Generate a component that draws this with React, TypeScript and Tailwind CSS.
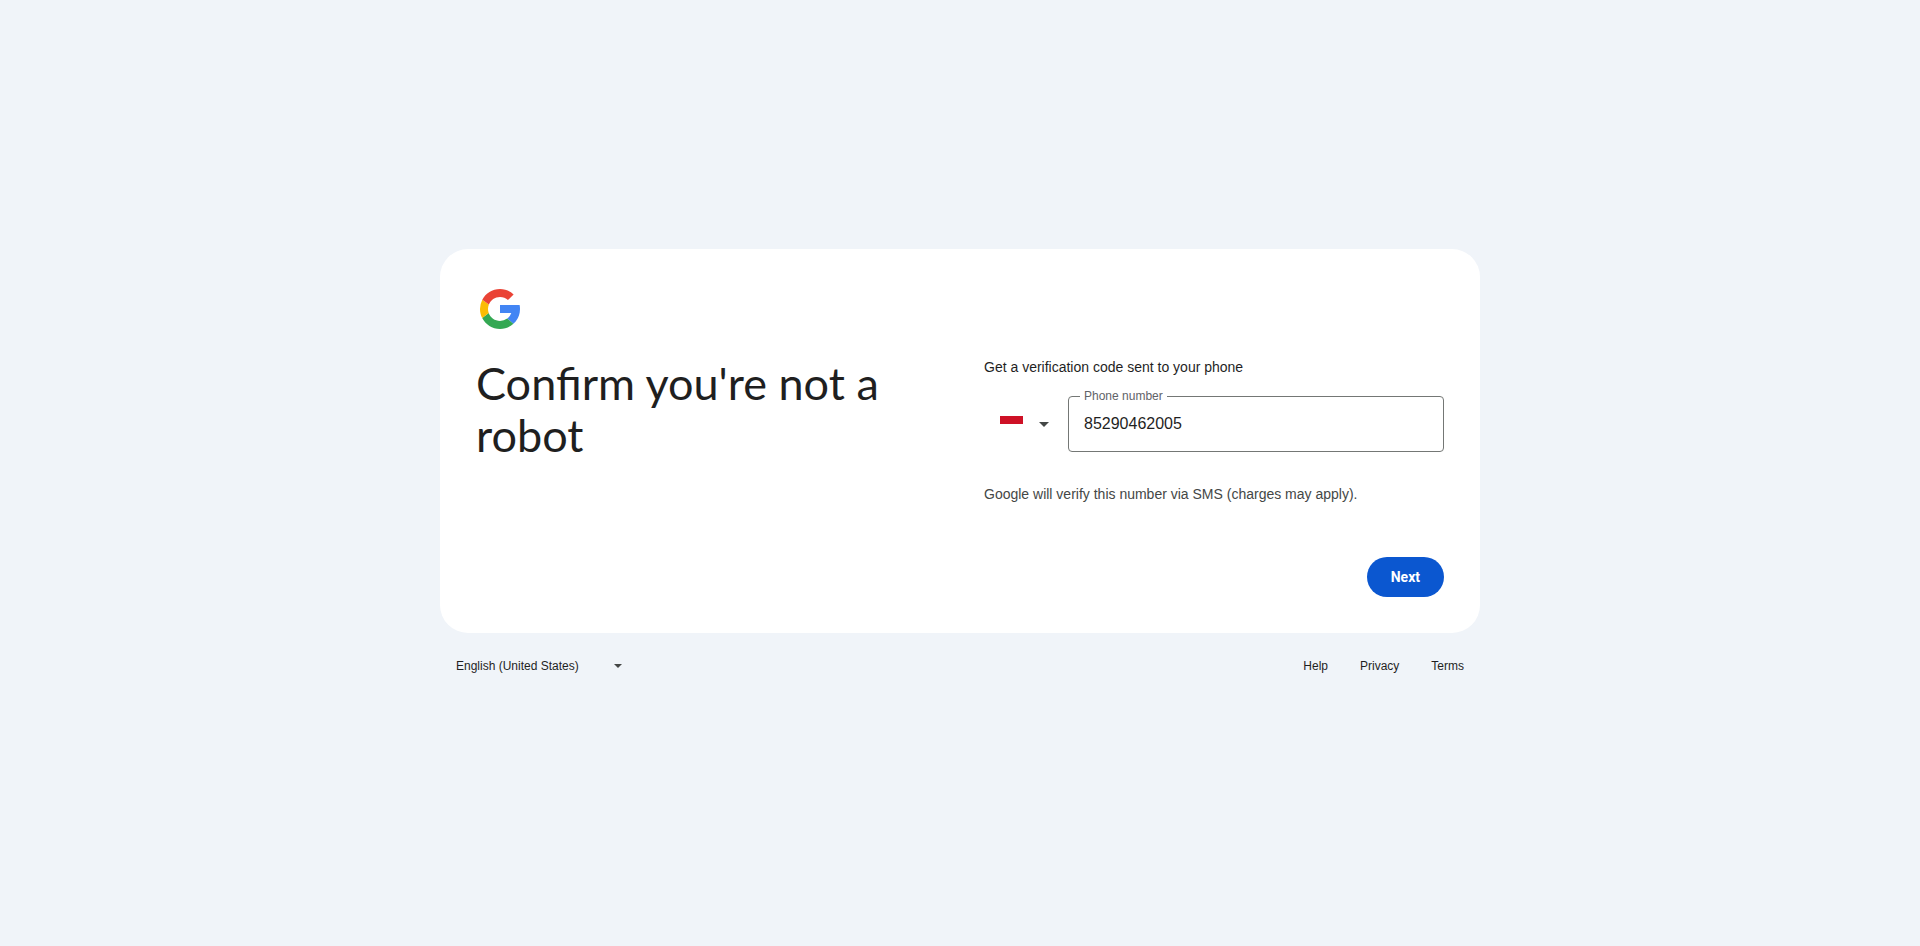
import { useState } from "react";

const links = ["Help", "Privacy", "Terms"];

const GoogleLogo = () => (
  <svg viewBox="0 0 48 48" className="size-12" aria-hidden="true">
    <path
      fill="#4285F4"
      d="M43.611 20.083 43.595 20H24v8h11.303a12.04 12.04 0 0 1-4.087 5.571l6.19 5.238C36.971 39.205 44 34 44 24c0-1.341-.138-2.65-.389-3.917z"
    />
    <path
      fill="#34A853"
      d="M24 44c5.166 0 9.86-1.977 13.409-5.192l-6.19-5.238A11.91 11.91 0 0 1 24 36c-5.202 0-9.619-3.317-11.283-7.946l-6.522 5.025C9.505 39.556 16.227 44 24 44z"
    />
    <path
      fill="#FBBC04"
      d="M12.717 28.054A11.97 11.97 0 0 1 12 24c0-1.6.313-3.127.877-4.51l-6.571-4.8A19.9 19.9 0 0 0 4 24c0 3.262.79 6.34 2.195 9.079z"
    />
    <path
      fill="#EA4335"
      d="m6.306 14.691 6.571 4.819C14.655 15.108 18.961 12 24 12c3.059 0 5.842 1.154 7.961 3.039l5.657-5.657C34.046 6.053 29.268 4 24 4 16.318 4 9.656 8.337 6.306 14.691z"
    />
  </svg>
);

const Caret = ({ className }: { className: string }) => (
  <svg viewBox="0 0 10 5" className={className} aria-hidden="true">
    <path fill="#444746" d="M0 0h10L5 5z" />
  </svg>
);

const CountrySelect = () => (
  <div className="relative flex h-14 w-[84px] items-center">
    <svg viewBox="0 0 24 16" className="pointer-events-none absolute left-4 h-4 w-6" aria-hidden="true">
      <path fill="#fff" d="M0 0h24v16H0z" />
      <path fill="#CE1126" d="M0 0h23v8H0z" />
    </svg>
    <select aria-label="Select a country" className="h-full w-full appearance-none bg-transparent outline-none">
      <option value="ID" aria-label="Indonesia" />
    </select>
    <Caret className="pointer-events-none absolute left-[55px] h-[5px] w-2.5" />
  </div>
);

const App = () => {
  const [phone, setPhone] = useState("85290462005");

  return (
    <div className="flex min-h-screen flex-col items-center justify-center bg-[#f0f4f9] font-['Liberation_Sans',sans-serif] text-[#1f1f1f]">
      <div className="w-full max-w-[1040px]">
        <main className="flex min-h-96 flex-col rounded-[28px] bg-white p-9">
          <GoogleLogo />

          <form className="mt-6 flex grow flex-col" onSubmit={(e) => e.preventDefault()}>
            <div className="grid gap-12 md:grid-cols-2">
              <h1 className="font-[Lato,sans-serif] text-[45px] leading-[52px]">Confirm you're not a robot</h1>

              <div className="text-sm leading-5">
                <h2>Get a verification code sent to your phone</h2>
                <div className="mt-[19px] flex">
                  <CountrySelect />
                  <div className="relative grow">
                    <label
                      htmlFor="phone"
                      className="absolute -top-2 left-3 bg-white px-1 text-xs leading-4 text-[#5f6368]"
                    >
                      Phone number
                    </label>
                    <input
                      id="phone"
                      type="tel"
                      value={phone}
                      onChange={(e) => setPhone(e.target.value)}
                      className="h-14 w-full rounded border border-[#747775] px-[15px] text-base outline-none"
                    />
                  </div>
                </div>
                <p className="mt-8 text-[#444746]">Google will verify this number via SMS (charges may apply).</p>
              </div>
            </div>

            <div className="mt-auto flex justify-end pt-8">
              <button
                type="submit"
                className="h-10 rounded-full bg-[#0b57d0] px-6 font-[Roboto,sans-serif] text-sm font-bold text-white hover:bg-[#1f64d4]"
              >
                Next
              </button>
            </div>
          </form>
        </main>

        <footer className="flex h-16 items-center justify-between px-4 pt-0.5 text-xs">
          <div className="relative flex items-center">
            <select aria-label="Language" className="w-44 appearance-none bg-transparent outline-none">
              <option>English (United States)</option>
            </select>
            <Caret className="pointer-events-none absolute right-2.5 h-1 w-2" />
          </div>
          <nav className="flex gap-8">
            {links.map((link) => (
              <a key={link} href="#">
                {link}
              </a>
            ))}
          </nav>
        </footer>
      </div>
    </div>
  );
};

export default App;
